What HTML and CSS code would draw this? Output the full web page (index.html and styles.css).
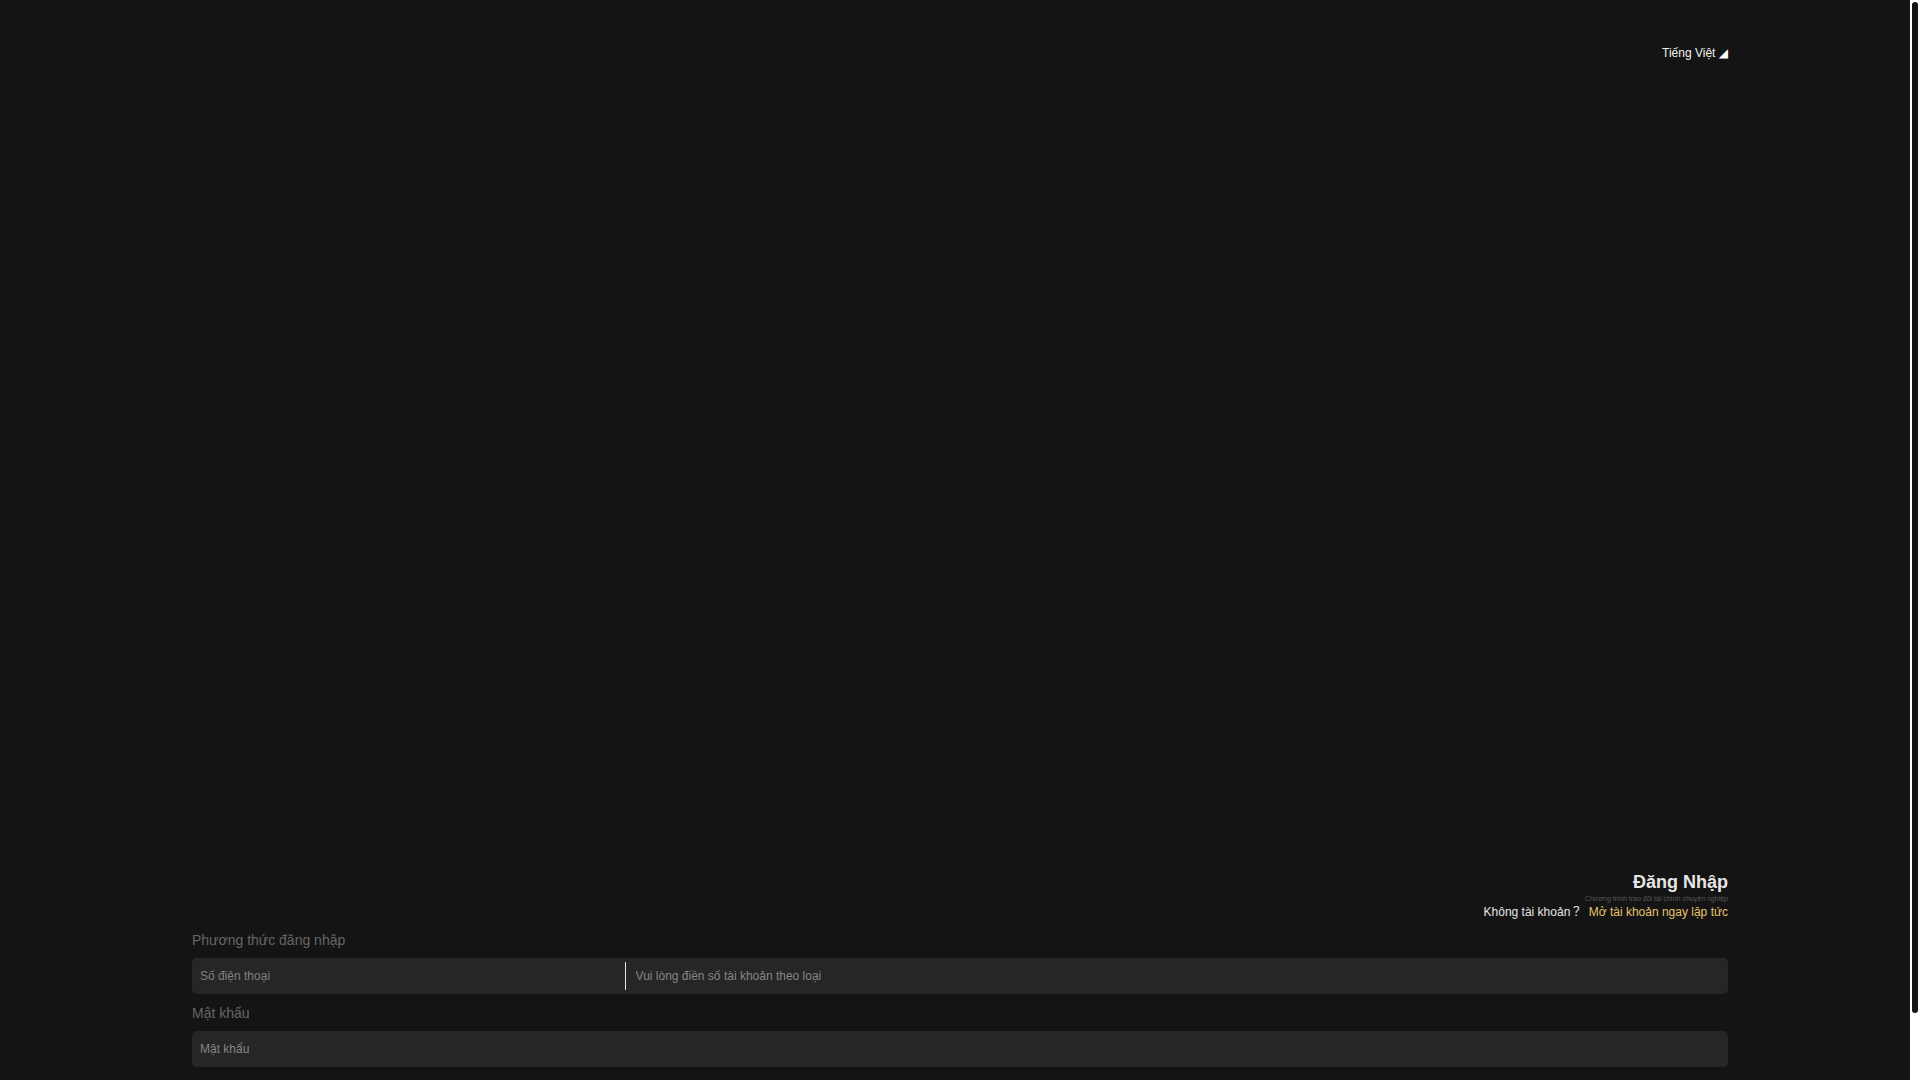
FILE: index.html
```html
<!DOCTYPE html>
<html lang="vi">
<head>
<meta charset="utf-8">
<meta name="viewport" content="width=device-width, initial-scale=1">
<title>Đăng Nhập</title>
<link rel="stylesheet" href="styles.css">
</head>
<body>
<main class="page">
  <header class="topbar">
    <button class="language" type="button">Tiếng Việt <span class="corner">◢</span></button>
  </header>
  <section class="intro">
    <h1 class="title">Đăng Nhập</h1>
    <p class="tagline">Chương trình trao đổi tài chính chuyên nghiệp</p>
    <p class="signup">Không tài khoản<span class="mark">？</span> <a class="signup-link" href="#">Mở tài khoản ngay lập tức</a></p>
  </section>
  <form class="form">
    <label class="label" for="account">Phương thức đăng nhập</label>
    <div class="field">
      <button class="method" type="button">Số điện thoại</button>
      <input class="input account" id="account" type="text" placeholder="Vui lòng điền số tài khoản theo loại">
    </div>
    <label class="label" for="password">Mật khẩu</label>
    <div class="field">
      <input class="input" id="password" type="password" placeholder="Mật khẩu">
    </div>
  </form>
</main>
<div class="track"><div class="thumb"></div></div>
</body>
</html>
```
FILE: styles.css
```css
* {
  box-sizing: border-box;
}

body {
  margin: 0;
  display: flex;
  height: 100vh;
  overflow: hidden;
  background: #141414;
  color: #e6e6e6;
  font: 12px/16px "Liberation Sans", "Noto Sans CJK TC", sans-serif;
  text-rendering: optimizeSpeed;
}

.page {
  flex: 1;
  display: flex;
  flex-direction: column;
  padding: 45px calc(10vw - 10px) 13px 10vw;
}

button,
input {
  margin: 0;
  padding: 0;
  border: 0;
  background: none;
  color: inherit;
  font: inherit;
  text-rendering: inherit;
}

.topbar {
  display: flex;
  justify-content: flex-end;
}

.language {
  color: #f2f2f2;
}

.corner {
  color: #fff;
  font-family: "DejaVu Sans", sans-serif;
}

.intro {
  margin-top: auto;
  margin-bottom: 1px;
  text-align: right;
}

.title {
  margin: 0;
  font-size: 18px;
  line-height: 24px;
}

.tagline {
  margin: 0;
  color: #595959;
  font-size: 7px;
  line-height: 10px;
}

.signup {
  margin: 0;
}

.mark {
  margin-right: 3px;
  font-family: "Noto Sans CJK TC", sans-serif;
  line-height: 1;
}

.signup-link {
  color: #e6c36e;
  text-decoration: none;
}

.form {
  display: flex;
  flex-direction: column;
}

.label {
  padding: 12px 0 10px;
  color: #666;
  font-size: 14px;
  line-height: 15px;
}

.field {
  display: flex;
  align-items: center;
  height: 36px;
  padding: 0 8px;
  border-radius: 5px;
  background: #262626;
}

.method {
  width: 28%;
  height: 28px;
  border-right: 1px solid #e6e6e6;
  color: #808080;
  text-align: left;
}

.input {
  flex: 1;
  height: 28px;
  outline: 0;
}

.account {
  padding-left: 10px;
}

.input::placeholder {
  color: #858585;
  opacity: 1;
}

.track {
  width: 10px;
  padding: 2px;
  background: #fff;
}

.thumb {
  height: 94%;
  border-radius: 3px;
  background: #141414;
}
```
